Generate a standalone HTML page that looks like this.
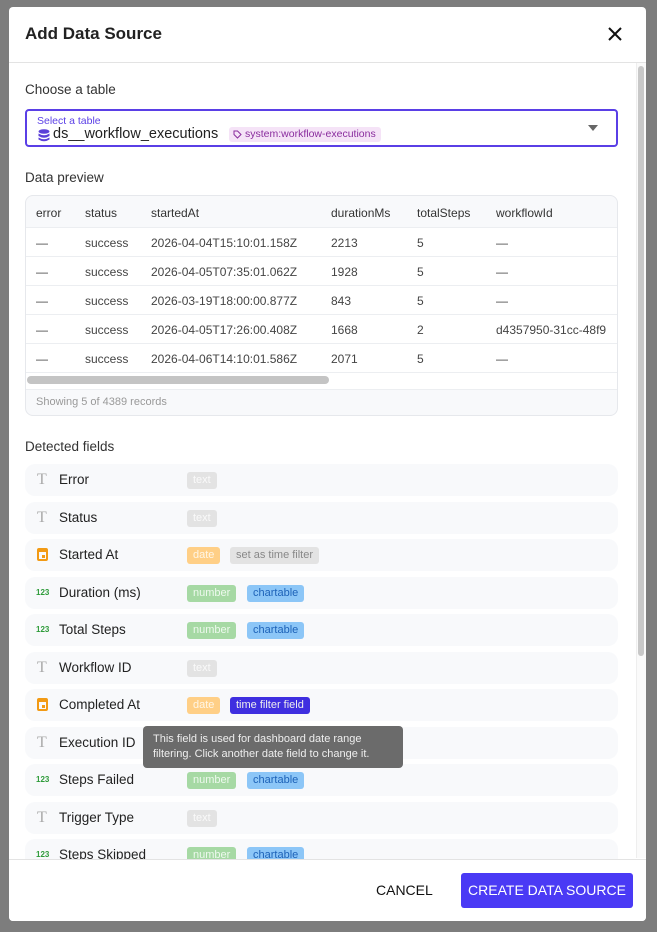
<!DOCTYPE html>
<html><head><meta charset="utf-8"><style>
*{box-sizing:border-box;margin:0;padding:0}
body{width:657px;height:932px;overflow:hidden;background:#7d7d7d;font-family:"Liberation Sans",sans-serif;position:relative;color:#1f2328}
.modal{position:absolute;left:9px;top:7px;width:637px;height:914px;background:#fff;border-radius:4px;overflow:hidden}
.hdr{position:absolute;left:0;top:0;width:637px;height:56px;border-bottom:1px solid #e3e3e3}
.hdr h1{position:absolute;left:16px;top:17px;font-size:17px;font-weight:bold;color:#222}
.x{position:absolute;left:598px;top:19px}
.abs{position:absolute}
.h2{font-size:13.5px;color:#333}
.sel{left:16px;top:102px;width:593px;height:38px;border:2px solid #5a3fe6;border-radius:4px}
.tbl{left:16px;top:188px;width:593px;height:221px;border:1px solid #e6e8ec;border-radius:8px;background:#f8f9fb;overflow:hidden}
.row{position:absolute;left:0;width:593px;height:29px;background:#fff;border-top:1px solid #eceef1;font-size:12px;color:#444}
.row span,.th span{position:absolute;top:8px;white-space:nowrap}
.th{position:absolute;left:0;top:0;width:593px;height:31px;font-size:12px;color:#333}
.fr{position:absolute;left:16px;width:593px;height:32px;background:#f8f9fb;border-radius:10px}
.fr .lb{position:absolute;left:34px;top:8px;font-size:13.5px;color:#222}
.fr .ic{position:absolute;left:12px;top:7px;font-family:"Liberation Serif",serif;font-size:16px;color:#aaa}
.n{position:absolute;left:11px;top:11px;font-size:8px;color:#2e9b3a;font-weight:bold}
.tag{position:absolute;top:8px;height:17px;line-height:17px;font-size:11px;padding:0 6px;border-radius:3px;color:#fff;white-space:nowrap}
.t{background:#e3e3e3;color:#fafafa}
.d{background:#ffcf86;color:#fff6e6}
.num{background:#a6d9a4;color:#eef9ee}
.ch{background:#8cc6f7;color:#1d62b8}
.cal{position:absolute;left:12px;top:9px;width:11px;height:13px;border:2px solid #f29a14;border-top-width:4px;border-radius:2px}
.cal:after{content:"";position:absolute;left:3px;top:3px;width:3px;height:3px;background:#f29a14}
</style></head><body>
<div class="modal">
 <div class="hdr"><h1>Add Data Source</h1>
  <svg class="x" width="16" height="16" viewBox="0 0 16 16"><path d="M2 2L14 14M14 2L2 14" stroke="#111" stroke-width="2"/></svg></div>
 <div class="abs h2" style="left:16px;top:75px">Choose a table</div>
 <div class="abs sel">
  <div class="abs" style="left:10px;top:4px;font-size:10.5px;color:#5a3fe6">Select a table</div>
  <svg class="abs" style="left:11px;top:18px" width="12" height="13" viewBox="0 0 12 13"><ellipse cx="6" cy="2.5" rx="5.5" ry="2.3" fill="#5b3fd8"/><path d="M0.5 4.5Q6 8 11.5 4.5V7Q6 10.5 0.5 7ZM0.5 8.5Q6 12 11.5 8.5V10.5Q6 14 0.5 10.5Z" fill="#5b3fd8"/></svg>
  <div class="abs" style="left:26px;top:15px;font-size:14.5px;color:#222">ds__workflow_executions</div>
  <div class="abs" style="left:202px;top:16px;height:15px;line-height:15px;padding:0 5px 0 16px;background:#f5e3f7;color:#8a2d9e;font-size:10.5px;border-radius:3px">system:workflow-executions
   <svg class="abs" style="left:4px;top:3px" width="9" height="9" viewBox="0 0 9 9"><path d="M1 1H4.5L8 4.5L4.5 8L1 4.5Z" fill="none" stroke="#8a2d9e"/></svg></div>
  <svg class="abs" style="left:561px;top:14px" width="10" height="6"><path d="M0 0H10L5 6Z" fill="#666"/></svg>
 </div>
 <div class="abs h2" style="left:16px;top:163px">Data preview</div>
 <div class="abs tbl">
  <div class="th"><span style="left:10px;top:10px">error</span><span style="left:59px;top:10px">status</span><span style="left:125px;top:10px">startedAt</span><span style="left:305px;top:10px">durationMs</span><span style="left:391px;top:10px">totalSteps</span><span style="left:470px;top:10px">workflowId</span></div>
  <div class="row" style="top:31px"><span style="left:10px">—</span><span style="left:59px">success</span><span style="left:125px">2026-04-04T15:10:01.158Z</span><span style="left:305px">2213</span><span style="left:391px">5</span><span style="left:470px">—</span></div>
  <div class="row" style="top:60px"><span style="left:10px">—</span><span style="left:59px">success</span><span style="left:125px">2026-04-05T07:35:01.062Z</span><span style="left:305px">1928</span><span style="left:391px">5</span><span style="left:470px">—</span></div>
  <div class="row" style="top:89px"><span style="left:10px">—</span><span style="left:59px">success</span><span style="left:125px">2026-03-19T18:00:00.877Z</span><span style="left:305px">843</span><span style="left:391px">5</span><span style="left:470px">—</span></div>
  <div class="row" style="top:118px"><span style="left:10px">—</span><span style="left:59px">success</span><span style="left:125px">2026-04-05T17:26:00.408Z</span><span style="left:305px">1668</span><span style="left:391px">2</span><span style="left:470px">d4357950-31cc-48f9</span></div>
  <div class="row" style="top:147px"><span style="left:10px">—</span><span style="left:59px">success</span><span style="left:125px">2026-04-06T14:10:01.586Z</span><span style="left:305px">2071</span><span style="left:391px">5</span><span style="left:470px">—</span></div>
  <div class="abs" style="left:0;top:176px;width:593px;height:18px;background:#fff;border-top:1px solid #eceef1;border-bottom:1px solid #eceef1"></div>
  <div class="abs" style="left:1px;top:180px;width:302px;height:8px;background:#c4c4c4;border-radius:4px"></div>
  <div class="abs" style="left:10px;top:200px;font-size:11px;color:#999">Showing 5 of 4389 records</div>
 </div>
 <div class="abs h2" style="left:16px;top:432px">Detected fields</div>
 <div class="fr" style="top:457px"><span class="ic">T</span><span class="lb">Error</span><span class="tag t" style="left:162px">text</span></div>
 <div class="fr" style="top:495px"><span class="ic">T</span><span class="lb">Status</span><span class="tag t" style="left:162px">text</span></div>
 <div class="fr" style="top:532px"><span class="cal"></span><span class="lb">Started At</span><span class="tag d" style="left:162px">date</span><span class="tag" style="left:205px;background:#e3e3e3;color:#888">set as time filter</span></div>
 <div class="fr" style="top:570px"><span class="n">123</span><span class="lb">Duration (ms)</span><span class="tag num" style="left:162px">number</span><span class="tag ch" style="left:222px">chartable</span></div>
 <div class="fr" style="top:607px"><span class="n">123</span><span class="lb">Total Steps</span><span class="tag num" style="left:162px">number</span><span class="tag ch" style="left:222px">chartable</span></div>
 <div class="fr" style="top:645px"><span class="ic">T</span><span class="lb">Workflow ID</span><span class="tag t" style="left:162px">text</span></div>
 <div class="fr" style="top:682px"><span class="cal"></span><span class="lb">Completed At</span><span class="tag d" style="left:162px">date</span><span class="tag" style="left:205px;background:#3f2fe0;color:#eee">time filter field</span></div>
 <div class="fr" style="top:720px"><span class="ic">T</span><span class="lb">Execution ID</span></div>
 <div class="fr" style="top:757px"><span class="n">123</span><span class="lb">Steps Failed</span><span class="tag num" style="left:162px">number</span><span class="tag ch" style="left:222px">chartable</span></div>
 <div class="fr" style="top:795px"><span class="ic">T</span><span class="lb">Trigger Type</span><span class="tag t" style="left:162px">text</span></div>
 <div class="fr" style="top:832px"><span class="n">123</span><span class="lb">Steps Skipped</span><span class="tag num" style="left:162px">number</span><span class="tag ch" style="left:222px">chartable</span></div>
 <div class="abs" style="left:134px;top:719px;width:260px;height:42px;background:#6b6b6b;border-radius:4px;color:#eee;font-size:11px;line-height:15px;padding:6px 10px;white-space:nowrap">This field is used for dashboard date range<br>filtering. Click another date field to change it.</div>
 <div class="abs" style="left:627px;top:56px;width:10px;height:795px;background:#fafafa;border-left:1px solid #eee"></div>
 <div class="abs" style="left:629px;top:59px;width:6px;height:590px;background:#c8c8c8;border-radius:3px"></div>
 <div class="abs" style="left:0;top:852px;width:637px;height:62px;background:#fff;border-top:1px solid #e3e3e3"></div>
 <div class="abs" style="left:367px;top:875px;font-size:14px;color:#111">CANCEL</div>
 <div class="abs" style="left:452px;top:866px;width:172px;height:35px;background:#4a3af5;border-radius:3px;color:#fff;font-size:14px;text-align:center;line-height:35px">CREATE DATA SOURCE</div>
</div>
</body></html>
